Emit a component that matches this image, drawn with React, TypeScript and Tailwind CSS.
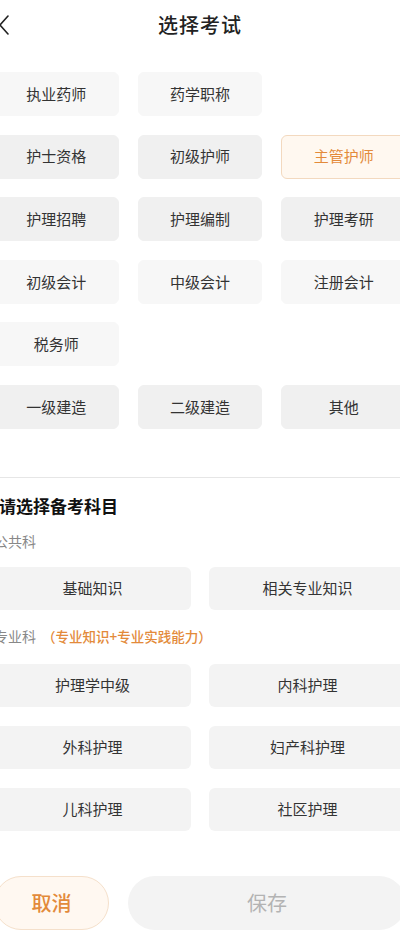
import { useState } from "react";

const EXAMS: { label: string; tone: "light" | "dark" }[][] = [
  [
    { label: "执业药师", tone: "light" },
    { label: "药学职称", tone: "light" },
  ],
  [
    { label: "护士资格", tone: "dark" },
    { label: "初级护师", tone: "dark" },
    { label: "主管护师", tone: "dark" },
  ],
  [
    { label: "护理招聘", tone: "dark" },
    { label: "护理编制", tone: "dark" },
    { label: "护理考研", tone: "dark" },
  ],
  [
    { label: "初级会计", tone: "light" },
    { label: "中级会计", tone: "light" },
    { label: "注册会计", tone: "light" },
  ],
  [{ label: "税务师", tone: "light" }],
  [
    { label: "一级建造", tone: "dark" },
    { label: "二级建造", tone: "dark" },
    { label: "其他", tone: "dark" },
  ],
];

const PUBLIC_SUBJECTS = ["基础知识", "相关专业知识"];
const MAJOR_SUBJECTS = ["护理学中级", "内科护理", "外科护理", "妇产科护理", "儿科护理", "社区护理"];

const font = { fontFamily: '"Noto Sans CJK SC", "Noto Sans", sans-serif' };

export default function App() {
  const [exam, setExam] = useState("主管护师");

  return (
    <div className="w-[400px] min-h-[949px] overflow-hidden bg-white" style={font}>
      <div className="w-[412px] -ml-[6px]">
        <header className="relative h-[50px] flex items-center justify-center">
          <button className="absolute left-[4px] top-[14px] w-[14px] h-[22px] flex items-center">
            <svg width="12" height="22" viewBox="0 0 12 22" fill="none">
              <path d="M10 2L2 11l8 9" stroke="#222" strokeWidth="1.6" strokeLinecap="round" strokeLinejoin="round" />
            </svg>
          </button>
          <h1 className="text-[20px] font-medium text-[#222] tracking-[1px]">选择考试</h1>
        </header>

        <div className="mt-[22px] flex flex-col gap-y-[18.6px]">
          {EXAMS.map((row, i) => (
            <div key={i} className="grid grid-cols-3 gap-x-[19px]">
              {row.map(item => {
                const active = exam === item.label;
                return (
                  <button
                    key={item.label}
                    onClick={() => setExam(item.label)}
                    className={`h-[44px] rounded-[6px] text-[15px] border ${
                      active
                        ? "bg-[#fff8f0] border-[#f3d9bf] text-[#e38a3a]"
                        : item.tone === "light"
                        ? "bg-[#f7f7f7] border-[#f7f7f7] text-[#333]"
                        : "bg-[#f0f0f0] border-[#f0f0f0] text-[#333]"
                    }`}
                  >
                    {item.label}
                  </button>
                );
              })}
            </div>
          ))}
        </div>

        <div className="mt-[48px] h-px bg-[#e6e6e6]" />

        <section className="pt-[16px]">
          <h2 className="ml-[5px] text-[17px] font-bold text-[#111] leading-[24px]">请选择备考科目</h2>
          <p className="mt-[13px] text-[14px] text-[#888] leading-[20px]">公共科</p>
          <div className="mt-[16px] grid grid-cols-2 gap-x-[18px]">
            {PUBLIC_SUBJECTS.map(s => (
              <button key={s} className="h-[43px] rounded-[6px] bg-[#f3f3f3] text-[15px] text-[#333]">
                {s}
              </button>
            ))}
          </div>
          <p className="mt-[16px] text-[14px] leading-[20px] text-[#888]">
            专业科
            <span className="ml-[6px] text-[#e38a3a] text-[13.5px] font-medium">（专业知识+专业实践能力）</span>
          </p>
          <div className="mt-[18px] grid grid-cols-2 gap-x-[18px] gap-y-[19px]">
            {MAJOR_SUBJECTS.map(s => (
              <button key={s} className="h-[43px] rounded-[6px] bg-[#f3f3f3] text-[15px] text-[#333]">
                {s}
              </button>
            ))}
          </div>
        </section>

        <footer className="mt-[45px] flex gap-[19px]">
          <button className="w-[115px] h-[54px] rounded-full bg-[#fff8f1] border border-[#f5e0cb] text-[20px] font-medium text-[#e38a3a]">
            取消
          </button>
          <button className="flex-1 h-[54px] rounded-full bg-[#f3f3f3] text-[20px] text-[#b3b3b3]">保存</button>
        </footer>
      </div>
    </div>
  );
}
